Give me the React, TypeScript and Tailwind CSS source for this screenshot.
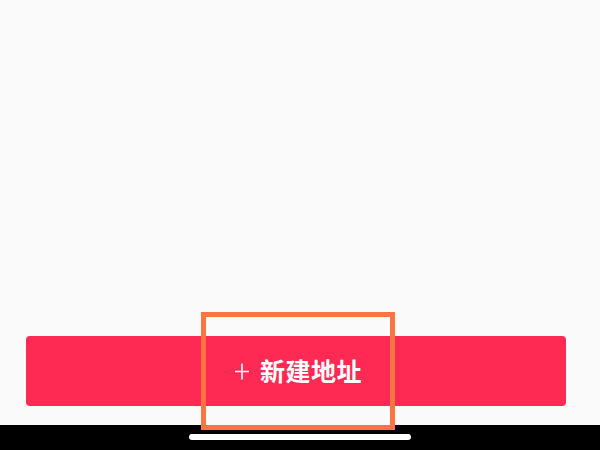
import { FC } from 'react';

const App: FC = () => {
  return (
    <div
      className="relative flex h-[450px] w-[600px] flex-col overflow-hidden bg-[#fafafa]"
      style={{ fontFamily: '"Noto Sans", "Noto Sans CJK SC", sans-serif' }}
    >
      {/* Empty address list area */}
      <div className="flex-1" />

      {/* Bottom action */}
      <div className="pb-[19px] pl-[26px] pr-[34px]">
        <button className="flex h-[70px] w-full items-center justify-center gap-[11px] rounded-[4px] bg-[#fe2a54] pl-[5px] text-white">
          <svg className="h-[17px] w-[14px]" viewBox="0 0 14 17" fill="none" stroke="currentColor" strokeWidth={1.6}>
            <path d="M7 0.5v16M0 8.5h14" />
          </svg>
          <span className="text-[25px] font-bold leading-none tracking-[0.5px]">新建地址</span>
        </button>
      </div>

      {/* Home indicator bar */}
      <div className="flex h-[25px] items-start justify-center bg-black pt-[9px]">
        <div className="h-[6px] w-[222px] rounded-full bg-white" />
      </div>

      {/* Highlight annotation */}
      <div className="pointer-events-none absolute left-[201px] top-[312px] h-[118px] w-[194px] border-[5px] border-[#fd7443]" />
    </div>
  );
};

export default App;
